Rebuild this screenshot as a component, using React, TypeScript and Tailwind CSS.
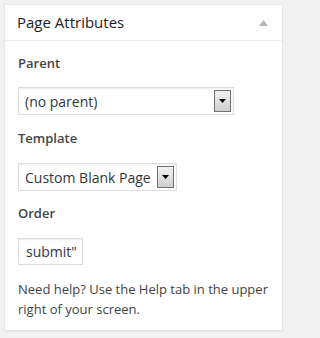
import React from "react";

function FakeSelect({ value, width }: { value: string; width: string }) {
  return (
    <div className={`flex h-[28px] items-center border border-[#dddddd] bg-white pl-[6px] pr-[2px] shadow-[inset_0_1px_2px_rgba(0,0,0,0.07)] ${width}`}>
      <span className="flex-1 whitespace-nowrap text-[14px] text-[#32373c]">{value}</span>
      {/* native-looking dropdown button */}
      <span className="flex h-[22px] w-[17px] items-center justify-center border border-[#707070] bg-gradient-to-b from-[#f2f2f2] to-[#cfcfcf]">
        <svg width="7" height="4" viewBox="0 0 7 4">
          <path d="M0 0h7L3.5 4z" fill="#000" />
        </svg>
      </span>
    </div>
  );
}

export default function App() {
  return (
    <div className="min-h-screen bg-[#f1f1f1] p-[4px] font-['Open_Sans',sans-serif] text-[#444444]">
      <div className="w-[279px] border border-[#e5e5e5] bg-white shadow-[0_1px_1px_rgba(0,0,0,0.04)]">
        {/* Header */}
        <div className="flex h-[36px] items-center justify-between border-b border-[#eeeeee] pl-[12px] pr-[14px]">
          <h2 className="text-[15px] font-medium leading-[21px] text-[#1d2125]">Page Attributes</h2>
          <svg width="9" height="6" viewBox="0 0 9 6">
            <path d="M0 6L4.5 0 9 6z" fill="#b4b9be" />
          </svg>
        </div>

        <div className="px-[13px] pb-[11px]">
          <p className="mt-[13px] text-[13px] font-semibold leading-[18px]">Parent</p>
          <div className="mt-[15px]">
            <FakeSelect value="(no parent)" width="w-[216px]" />
          </div>

          <p className="mt-[14px] text-[13px] font-semibold leading-[18px]">Template</p>
          <div className="mt-[16px]">
            <FakeSelect value="Custom Blank Page" width="w-[159px]" />
          </div>

          <p className="mt-[13px] text-[13px] font-semibold leading-[18px]">Order</p>
          <div className="mt-[16px] flex h-[27px] w-[65px] items-center border border-[#dddddd] bg-white pl-[7px] text-[14px] text-[#32373c] shadow-[inset_0_1px_2px_rgba(0,0,0,0.07)]">
            submit&quot;
          </div>

          <p className="mt-[14px] text-[13px] leading-[20px]">
            Need help? Use the Help tab in the upper right of your screen.
          </p>
        </div>
      </div>
    </div>
  );
}
